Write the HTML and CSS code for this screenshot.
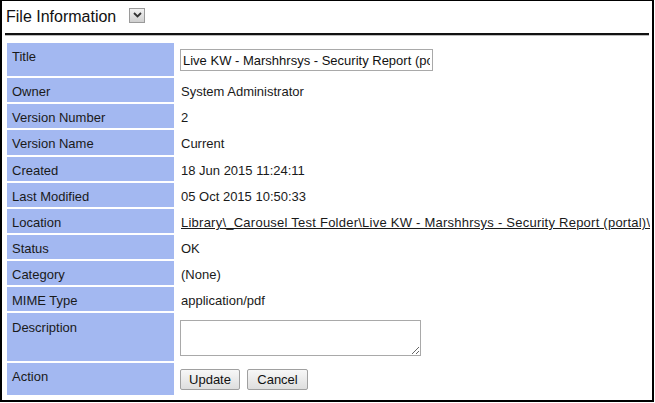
FILE: index.html
```html
<!DOCTYPE html>
<html lang="en">
<head>
    <meta charset="UTF-8">
    <title>File Information</title>
    <link rel="stylesheet" href="styles.css">
</head>
<body>
    <div class="panel">
        <div class="panel-header">
            <span class="panel-title">File Information</span>
            <button class="toggle" type="button">
                <svg width="9" height="6" viewBox="0 0 9 6"><path d="M1 1 L4.5 4.5 L8 1" fill="none" stroke="#333" stroke-width="1.8"/></svg>
            </button>
        </div>
        <table class="info">
            <tr class="row-input">
                <th>Title</th>
                <td><input class="title-input" type="text" value="Live KW - Marshhrsys - Security Report (portal).pdf"></td>
            </tr>
            <tr><th>Owner</th><td>System Administrator</td></tr>
            <tr><th>Version Number</th><td>2</td></tr>
            <tr class="row-tall"><th>Version Name</th><td>Current</td></tr>
            <tr><th>Created</th><td>18 Jun 2015 11:24:11</td></tr>
            <tr><th>Last Modified</th><td>05 Oct 2015 10:50:33</td></tr>
            <tr><th>Location</th><td class="location"><a href="#">Library\_Carousel Test Folder\Live KW - Marshhrsys - Security Report (portal)\</a></td></tr>
            <tr><th>Status</th><td>OK</td></tr>
            <tr><th>Category</th><td>(None)</td></tr>
            <tr><th>MIME Type</th><td>application/pdf</td></tr>
            <tr class="row-desc">
                <th>Description</th>
                <td><textarea class="desc"></textarea></td>
            </tr>
            <tr class="row-action">
                <th>Action</th>
                <td>
                    <button class="btn btn-update" type="button">Update</button><button class="btn btn-cancel" type="button">Cancel</button>
                </td>
            </tr>
        </table>
    </div>
</body>
</html>
```

FILE: styles.css
```css
body {
    margin: 0;
    font-family: "Liberation Sans", Arial, sans-serif;
    font-size: 13px;
    color: #1a1a1a;
    background: #fff;
}
.panel {
    box-sizing: border-box;
    width: 654px;
    height: 402px;
    border: 2px solid #000;
    border-top-width: 1px;
    padding: 0 3px;
    overflow: hidden;
}
.panel-header {
    display: flex;
    align-items: center;
    height: 32px;
    padding-left: 1px;
    border-bottom: 2px solid #111;
    box-shadow: 0 1px 0 #bbb;
}
.panel-title {
    font-size: 16px;
    color: #111;
}
.toggle {
    margin-left: 13px;
    margin-top: -4px;
    width: 16px;
    height: 15px;
    padding: 0;
    border: 1px solid #9a9a9a;
    background: linear-gradient(#f2f2f2, #cfcfcf);
    display: flex;
    align-items: center;
    justify-content: center;
}
.info {
    margin-top: 6px;
    border-spacing: 2px;
    width: 647px;
    table-layout: fixed;
}
.info th {
    width: 157px;
    background: #a3b8f1;
    font-weight: normal;
    text-align: left;
    vertical-align: top;
    padding: 6px 5px 3px 5px;
    line-height: 15px;
    height: 15px;
}
.info td {
    vertical-align: top;
    padding: 6px 5px 3px 5px;
    line-height: 15px;
    white-space: nowrap;
}
.info .row-tall th,
.info .row-tall td {
    padding-bottom: 4px;
}
.row-input td {
    padding: 6px 4px 5px 4px;
}
.row-input th {
    height: 24px;
}
.title-input {
    box-sizing: border-box;
    display: block;
    width: 253px;
    height: 22px;
    border: 1px solid #a9a9a9;
    padding: 0 2px;
    margin: 0;
    font-family: "Liberation Sans", Arial, sans-serif;
    font-size: 13px;
    color: #111;
}
.location {
    overflow: hidden;
}
.location a {
    color: #1a1a1a;
    text-decoration: underline;
    letter-spacing: 0.24px;
}
.info .row-desc th {
    padding-top: 7px;
    height: 37px;
}
.info .row-desc td {
    padding: 7px 4px 5px 4px;
}
.desc {
    box-sizing: border-box;
    display: block;
    width: 241px;
    height: 36px;
    margin: 0;
    border: 1px solid #a9a9a9;
    resize: both;
}
.row-action th {
    height: 23px;
}
.row-action td {
    padding: 6px 4px 5px 4px;
}
.btn {
    box-sizing: border-box;
    height: 21px;
    padding: 0;
    border: 1px solid #a0a0a0;
    border-radius: 2px;
    background: linear-gradient(#f7f7f7, #dedede);
    font-family: "Liberation Sans", Arial, sans-serif;
    font-size: 13px;
    color: #111;
}
.btn-update {
    width: 60px;
    margin-right: 7px;
}
.btn-cancel {
    width: 61px;
}
```
